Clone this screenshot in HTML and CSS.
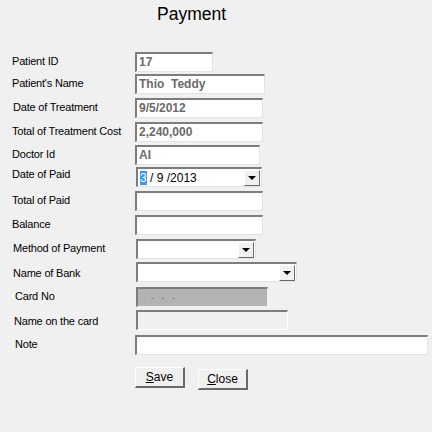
FILE: index.html
```html
<!DOCTYPE html>
<html>
<head>
<meta charset="utf-8">
<link rel="stylesheet" href="styles.css">
</head>
<body>
<div class="title">Payment</div>
<div class="form">
  <div class="lbl">Patient ID</div>
  <div class="fld ro w78">17</div>

  <div class="lbl">Patient's Name</div>
  <div class="fld ro w130">Thio  Teddy</div>

  <div class="lbl l1">Date of Treatment</div>
  <div class="fld ro w128">9/5/2012</div>

  <div class="lbl">Total of Treatment Cost</div>
  <div class="fld ro w128">2,240,000</div>

  <div class="lbl">Doctor Id</div>
  <div class="fld ro w125">AI</div>

  <div class="lbl up2">Date of Paid</div>
  <div class="fld combo w126 x1"><span class="date"><span class="sel">3</span> / 9 /2013</span><span class="drop"><span class="tri"></span></span></div>

  <div class="lbl">Total of Paid</div>
  <div class="fld w128"></div>

  <div class="lbl">Balance</div>
  <div class="fld w128"></div>

  <div class="lbl l1">Method of Payment</div>
  <div class="fld combo w120 x1"><span class="date"></span><span class="drop"><span class="tri"></span></span></div>

  <div class="lbl l1 dn2">Name of Bank</div>
  <div class="fld combo w161 x1"><span class="date"></span><span class="drop"><span class="tri"></span></span></div>

  <div class="lbl l3">Card No</div>
  <div class="fld card w132 x1"><span class="dots">-&nbsp;&nbsp;&nbsp;-&nbsp;&nbsp;&nbsp;-</span></div>

  <div class="lbl l2 dn2">Name on the card</div>
  <div class="fld dis w152 x1"></div>

  <div class="lbl l3">Note</div>
  <div class="fld w293"></div>
</div>
<div class="buttons">
  <div class="btn"><u>S</u>ave</div>
  <div class="btn btn2"><u>C</u>lose</div>
</div>
</body>
</html>
```
FILE: styles.css
```css
html, body {
  margin: 0;
  padding: 0;
  background: #f0f0f0;
  width: 432px;
  height: 432px;
  overflow: hidden;
  font-family: "Liberation Sans", Arial, sans-serif;
  font-size: 11px;
  color: #000;
}
.title {
  padding-top: 4px;
  padding-left: 157px;
  font-size: 17.5px;
  line-height: 20px;
  height: 20px;
}
.form {
  margin-top: 28px;
  padding-left: 12px;
  display: grid;
  grid-template-columns: 123px 1fr;
  grid-template-rows: 22px 24px 24px 23px 22px 24px 24px 24px 23px 25px 23px 25px 21px;
}
.lbl {
  align-self: start;
  line-height: 14px;
  margin-top: 2px;
  white-space: nowrap;
  letter-spacing: -0.2px;
}
.l1 { padding-left: 1px; }
.l2 { padding-left: 2px; }
.l3 { padding-left: 3px; }
.up2 { margin-top: 0; }
.dn2 { margin-top: 4px; }
.fld {
  box-sizing: border-box;
  height: 20px;
  background: #fff;
  border-top: 2px solid #7d7d7d;
  border-left: 2px solid #7d7d7d;
  border-right: 1px solid #e3e3e3;
  border-bottom: 1px solid #e3e3e3;
  padding-left: 2px;
  line-height: 16px;
  font-size: 12px;
  white-space: pre;
  position: relative;
}
.x1 { margin-left: 1px; }
.ro {
  color: #6a6a6a;
  font-weight: bold;
}
.w78 { width: 78px; }
.w120 { width: 120px; }
.w125 { width: 125px; }
.w126 { width: 126px; }
.w128 { width: 128px; }
.w130 { width: 130px; }
.w132 { width: 132px; }
.w152 { width: 152px; }
.w161 { width: 161px; }
.w293 { width: 293px; }
.combo {
  display: flex;
  align-items: center;
}
.date { flex: 1; }
.sel {
  background: #3399ff;
  color: #fff;
}
.drop {
  box-sizing: border-box;
  width: 16px;
  height: 16px;
  margin-right: 1px;
  background: #f0f0f0;
  border-top: 1px solid #fff;
  border-left: 1px solid #fff;
  border-right: 1px solid #6a6a6a;
  border-bottom: 1px solid #6a6a6a;
  display: flex;
  align-items: center;
  justify-content: center;
}
.tri {
  width: 0;
  height: 0;
  border-left: 4px solid transparent;
  border-right: 4px solid transparent;
  border-top: 4px solid #000;
  margin-top: 1px;
}
.card {
  background: #b3b3b3;
  border-right-color: #f0f0f0;
  border-bottom-color: #f0f0f0;
}
.dots {
  padding-left: 11px;
  color: #6a6a6a;
  font-size: 9px;
}
.dis {
  background: #f0f0f0;
  border-right-color: #fff;
  border-bottom-color: #fff;
}
.buttons {
  display: flex;
  gap: 13px;
  padding-left: 135px;
  margin-top: 11px;
}
.btn {
  box-sizing: border-box;
  width: 50px;
  height: 21px;
  background: #f0f0f0;
  border-top: 1px solid #fff;
  border-left: 1px solid #fff;
  border-right: 2px solid #6a6a6a;
  border-bottom: 2px solid #6a6a6a;
  text-align: center;
  line-height: 18px;
  font-size: 12px;
}
.btn2 { margin-top: 2px; }
```
